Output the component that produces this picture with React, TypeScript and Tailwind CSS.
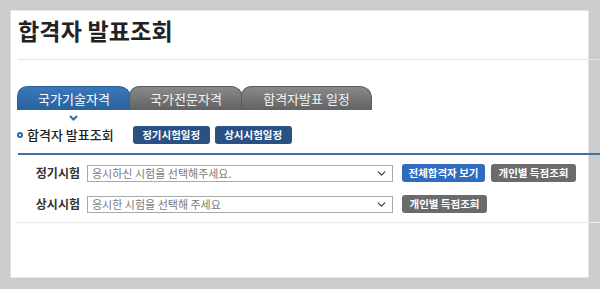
import { ChevronDown } from "lucide-react";

const font = { fontFamily: '"Noto Sans CJK KR", "Noto Sans", sans-serif' };

const Tab = ({ label, active }: { label: string; active?: boolean }) => (
  <div
    className={`h-[24px] flex items-center justify-center rounded-tl-[10px] rounded-tr-[12px] text-[13px] -mr-[2px] border border-b-0 ${
      active
        ? "bg-gradient-to-b from-[#3a78b8] to-[#2a629c] text-white border-[#2a629c] z-10"
        : "bg-gradient-to-b from-[#8a8a8a] to-[#626262] text-[#f2f2f2] border-[#5a5a5a]"
    }`}
  >
    {label}
  </div>
);

const SelectBox = ({ placeholder }: { placeholder: string }) => (
  <div className="w-[306px] h-[17px] border border-[#a9a9a9] bg-white flex items-center justify-between pl-[4px] pr-[4px] text-[11px] text-[#7a7a7a]">
    <span className="leading-none">{placeholder}</span>
    <ChevronDown size={13} strokeWidth={2} className="text-[#333]" />
  </div>
);

const SmallButton = ({ text, color, w }: { text: string; color: string; w: string }) => (
  <div className={`${color} ${w} h-[18px] rounded-[3px] text-white text-[10.5px] font-bold flex items-center justify-center leading-none`}>
    {text}
  </div>
);

export default function App() {
  return (
    <div className="w-[600px] h-[289px] bg-[#cccccc] pt-[10px] pl-[10px] pr-[11px] pb-[11px] overflow-hidden" style={font}>
      <div className="h-full bg-white border border-[#e4e4e4]">
        {/* page title */}
        <div className="h-[48px] pl-[7px] pt-[2px]">
          <h1 className="text-[23px] font-bold text-[#222] tracking-[0.2px]">합격자 발표조회</h1>
        </div>
        <div className="border-t border-[#e3e3e3] ml-[7px] -mr-[13px]" />

        {/* tabs */}
        <div className="flex mt-[26px] pl-[6px]">
          <div className="w-[112px]"><Tab label="국가기술자격" active /></div>
          <div className="w-[112px]"><Tab label="국가전문자격" /></div>
          <div className="w-[129px]"><Tab label="합격자발표 일정" /></div>
        </div>
        <div className="h-[16px] w-[112px] ml-[6px] flex justify-center pt-[5px]">
          <svg width="9" height="6" viewBox="0 0 9 6">
            <path d="M1 1 L4.5 4.5 L8 1" stroke="#2f6aa8" strokeWidth="2" fill="none" />
          </svg>
        </div>

        {/* section heading */}
        <div className="h-[18px] flex items-center pl-[6px]">
          <span className="w-[6px] h-[6px] rounded-full border-2 border-[#2f6aa8] mr-[4px]" />
          <span className="text-[13px] font-medium text-[#222] mr-[19px]">합격자 발표조회</span>
          <SmallButton text="정기시험일정" color="bg-[#2a5184]" w="w-[77px]" />
          <div className="w-[5px]" />
          <SmallButton text="상시시험일정" color="bg-[#2a5184]" w="w-[77px]" />
        </div>
        <div className="mt-[9px] border-t-2 border-[#42719f] ml-[7px] -mr-[13px]" />

        {/* rows */}
        <div className="pt-[9px] ml-[7px] flex flex-col gap-[13px]">
          <div className="flex items-center h-[18px]">
            <span className="w-[62px] text-right text-[12px] font-bold text-[#333] mr-[7px]">정기시험</span>
            <SelectBox placeholder="응시하신 시험을 선택해주세요." />
            <div className="w-[9px]" />
            <SmallButton text="전체합격자 보기" color="bg-[#2f6cc0]" w="w-[83px]" />
            <div className="w-[6px]" />
            <SmallButton text="개인별 득점조회" color="bg-[#6b6b6b]" w="w-[85px]" />
          </div>
          <div className="flex items-center h-[18px]">
            <span className="w-[62px] text-right text-[12px] font-bold text-[#333] mr-[7px]">상시시험</span>
            <SelectBox placeholder="응시한 시험을 선택해 주세요" />
            <div className="w-[9px]" />
            <SmallButton text="개인별 득점조회" color="bg-[#6b6b6b]" w="w-[85px]" />
          </div>
        </div>
        <div className="mt-[9px] border-t border-[#ececec] ml-[5px] -mr-[13px]" />
      </div>
    </div>
  );
}
